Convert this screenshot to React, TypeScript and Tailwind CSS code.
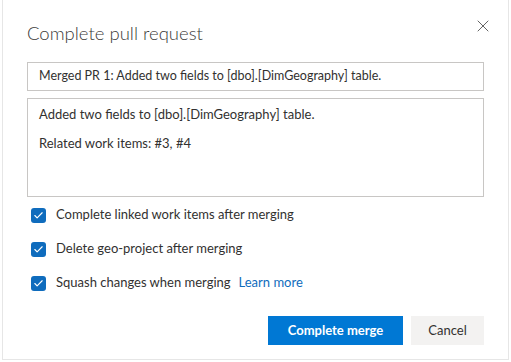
import { X, Check } from "lucide-react";

const options = [
  { label: "Complete linked work items after merging" },
  { label: "Delete geo-project after merging" },
  { label: "Squash changes when merging", link: "Learn more" },
];

export default function App() {
  return (
    <div className="w-[511px] h-[362px] bg-white p-[2px] pt-0 font-['Lato',sans-serif] text-[#323130]">
      <div className="h-full border border-[#e6e6e6] border-t-0 bg-white px-[24px] pt-[19px]">
        <div className="flex items-start justify-between">
          <h1 className="text-[18.5px] font-light leading-[28px] text-[#3b3a39]">Complete pull request</h1>
          <button className="-mt-[3px] -mr-[9px] text-[#444]">
            <X className="h-[20px] w-[20px]" strokeWidth={1} />
          </button>
        </div>

        <div className="mt-[15px] flex h-[29px] items-center border border-[#c8c6c4] px-[11px] text-[12.5px]">
          Merged PR 1: Added two fields to [dbo].[DimGeography] table.
        </div>

        <div className="mt-[7px] h-[99px] border border-[#c8c6c4] px-[11px] pt-[6px] text-[13px] leading-[19px]">
          <p>Added two fields to [dbo].[DimGeography] table.</p>
          <p className="mt-[10px]">Related work items: #3, #4</p>
        </div>

        <div className="mt-[8px] flex flex-col gap-[14px] pl-[4px]">
          {options.map((o) => (
            <label key={o.label} className="flex h-[20px] items-center gap-[10px] text-[13px]">
              <span className="flex h-[15px] w-[15px] items-center justify-center rounded-[3px] bg-[#0f6cbd]">
                <Check className="h-[11px] w-[11px] text-white" strokeWidth={2.5} />
              </span>
              <span>{o.label}</span>
              {o.link && <span className="-ml-[2px] text-[#0f6cbd]">{o.link}</span>}
            </label>
          ))}
        </div>

        <div className="mt-[23px] flex justify-end gap-[8px]">
          <button className="h-[29px] w-[135px] bg-[#0078d4] text-[13px] font-bold text-white">
            Complete merge
          </button>
          <button className="h-[29px] w-[73px] bg-[#f3f2f1] text-[13px] text-[#323130]">Cancel</button>
        </div>
      </div>
    </div>
  );
}
